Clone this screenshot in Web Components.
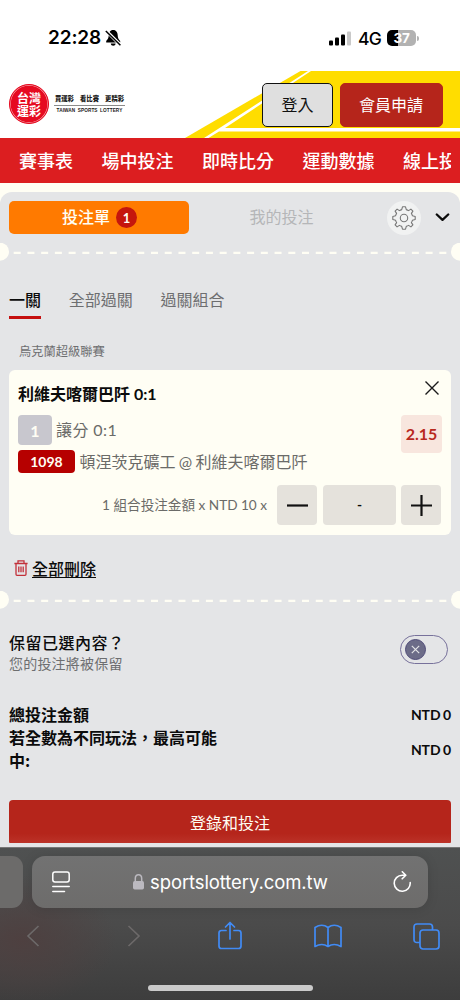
<!DOCTYPE html>
<html lang="zh-Hant">
<head>
<meta charset="utf-8">
<title>台灣運彩</title>
<style>
html,body{margin:0;padding:0}
body{width:460px;height:1000px;overflow:hidden;background:#fffef4;font-family:Lato,"Noto Sans CJK TC",sans-serif;color:#0b0b0b}
</style>
</head>
<body>
<phone-screen></phone-screen>
<script>
const define = (name, css, html) => customElements.define(name, class extends HTMLElement {
  constructor() {
    super();
    const root = this.attachShadow({ mode: 'open' });
    root.innerHTML = `<style>*{box-sizing:border-box}:host{display:block;box-sizing:border-box;white-space:nowrap}svg{display:block;flex:none}${css}</style>${html}`;
  }
});

define('status-bar', `
:host{height:71px;background:#fff;font-family:Inter,sans-serif;color:#000}
.row{display:flex;align-items:center;height:76px;padding:0 41px 0 48px}
.time{font-size:19px;font-weight:600;width:57px;line-height:24px;letter-spacing:-.15px}
.net{font-size:17.5px;font-weight:500;margin-left:10px;width:22px;letter-spacing:-.8px}
.gap{flex:1}
.bat{width:29px;height:16px;border-radius:5px;background:linear-gradient(90deg,#000 38%,#b2b2b2 38%);color:#fff;font-weight:700;font-size:13.5px;line-height:16px;text-align:center;margin-left:7px;letter-spacing:-.3px}
.tip{width:2px;height:5px;border-radius:0 2px 2px 0;background:#b2b2b2;margin-left:1px}
svg.sig{margin-right:-3px}
`, `<div class="row"><span class="time">22:28</span>
<svg width="17" height="18" viewBox="0 0 17 18"><path d="M8.2 1C5 1 3.8 3.6 3.7 6.3 3.6 10 2.2 10.8 1.2 12v1.500h14V12c-1-1.200-2.400-2-2.500-5.700C12.600 3.600 11.400 1 8.200 1zM5.800 14.600h4.800c0 3-4.800 3-4.800 0z"/><path d="M1 1.700 16 16.500" stroke="#fff" stroke-width="3.200"/><path d="M.8 2 15.400 16.300" stroke="#000" stroke-width="1.500"/></svg>
<span class="gap"></span>
<svg class="sig" width="22" height="15" viewBox="0 0 22 15"><rect y="9.500" width="4" height="5" rx="1"/><rect x="6" y="6.500" width="4" height="8" rx="1"/><rect x="12" y="3.500" width="4" height="11" rx="1"/><rect x="18" y=".5" width="4" height="14" rx="1" fill="#c9c9c9"/></svg>
<span class="net">4G</span><span class="bat">37</span><span class="tip"></span></div>`);

define('brand-logo', `
:host{display:flex;align-items:center;color:#1a1a1a;font-family:"Noto Sans CJK TC",sans-serif}
.seal{width:40px;height:40px;border-radius:50%;background:#e60a20;border:1px solid #e60a20;box-shadow:inset 0 0 0 .7px #f6a2a8;color:#fff;font-weight:700;font-size:12px;line-height:13px;text-align:center;padding-top:6px}
.words{margin-left:5px;width:71px}
.zh{display:flex;justify-content:space-between;font-size:6.3px;font-weight:900;line-height:9px;padding:0 1px 0 1px;height:10px}
.en{border-top:1px solid #8b8b8b;text-align:center;font:600 4.7px/6px "Liberation Sans",sans-serif;padding-top:2px;height:10px;margin-top:1px;letter-spacing:.1px;word-spacing:1px}
`, `<div class="seal">台灣<br>運彩</div><div class="words"><div class="zh"><span>買運彩</span><span>看比賽</span><span>更精彩</span></div><div class="en">TAIWAN SPORTS LOTTERY</div></div>`);

define('site-header', `
:host{height:67px;display:grid;background:#fff}
.art,.row{grid-area:1/1}
.row{display:flex;align-items:flex-start;padding:12px 17px 0 9px}
brand-logo{flex:1;padding-top:1px}
.btn{height:44px;border-radius:5px;font-size:16px;line-height:42px;text-align:center}
.login{width:71px;border:1px solid #111;background:#dfdfdf;color:#111}
.join{width:103px;margin-left:7px;background:#b5251b;color:#fff;border:1px solid #b5251b;padding-right:1px}
`, `<svg class="art" width="460" height="67" viewBox="0 0 460 67"><path d="M300.500 0H460V67H185z" fill="#ffdd00"/><path d="M308 0 204 67H208.500L219 60.500H460V57H225L311 0z" fill="#fff"/></svg>
<div class="row"><brand-logo></brand-logo><div class="btn login">登入</div><div class="btn join">會員申請</div></div>`);

define('site-nav', `
:host{display:flex;gap:28.300px;height:45px;background:#dc1e20;color:#fff;font:500 18px/44px "Noto Sans CJK TC",sans-serif;padding:0 9px 0 19px}
.clip{overflow:hidden;flex:1}
span{letter-spacing:.05px}
`, `<span>賽事表</span><span>場中投注</span><span>即時比分</span><span>運動數據</span><span class="clip">線上投注</span>`);

define('slip-tabs', `
:host{display:flex;align-items:center;height:51px;padding:0 10px 0 9px}
.on{display:flex;align-items:center;justify-content:center;gap:6px;width:180px;height:33px;border-radius:5px;background:#ff7a00;color:#fffef4;font:500 16px/31px "Noto Sans CJK TC",sans-serif;padding-left:1px}
.on span:first-child{height:33px}
.n{width:21px;height:21px;border-radius:50%;background:#c5160d;text-align:center;font:700 13px/22px Lato,sans-serif}
.off{width:198px;text-align:center;color:#b5b6b8;font:16px/31px "Noto Sans CJK TC",sans-serif;height:33px;padding-right:13px}
.gear{width:34px;height:34px;border-radius:50%;background:#f1f2f2;display:grid;place-items:center}
.chev{margin-left:14px}
`, `<div class="on"><span>投注單</span><span class="n">1</span></div><div class="off">我的投注</div>
<div class="gear"><svg width="24" height="24" viewBox="-12 -12 24 24" fill="none" stroke="#777" stroke-width="1.100" stroke-linejoin="round"><circle r="3.700"/><path d="M-1.500-11.200H1.500L2.300-8.400Q3.600-8 4.600-7.400L6.900-8.900 8.900-6.900 7.400-4.600Q8-3.600 8.400-2.300L11.200-1.500V1.500L8.400 2.300Q8 3.600 7.400 4.600L8.900 6.900 6.900 8.900 4.600 7.400Q3.600 8 2.300 8.400L1.500 11.200H-1.500L-2.300 8.400Q-3.600 8-4.600 7.400L-6.900 8.900-8.900 6.900-7.400 4.600Q-8 3.600-8.400 2.300L-11.200 1.500V-1.500L-8.400-2.300Q-8-3.600-7.400-4.600L-8.900-6.900-6.900-8.900-4.600-7.400Q-3.600-8-2.300-8.400z"/></svg></div>
<svg class="chev" width="15" height="9" viewBox="0 0 15 9" fill="none" stroke="#0b0b0b" stroke-width="2.300" stroke-linecap="round" stroke-linejoin="round"><path d="M1.800 1.500 7.500 6.800 13.200 1.500"/></svg>`);

define('ticket-divider', `:host{height:18px}`, `<svg width="460" height="18" viewBox="0 0 460 18" fill="#fffef4"><circle cy="8.700" r="9"/><circle cx="460" cy="8.700" r="9"/><path d="M13.700 9.800H449" stroke="#fffef4" stroke-width="2.300" stroke-dasharray="7 6.730"/></svg>`);

define('mode-tabs', `
:host{display:flex;gap:27.700px;padding:24px 9px 0;height:80px;font:16px/28px "Noto Sans CJK TC",sans-serif;color:#6d6e70}
.on{color:#0b0b0b;font-weight:500;height:34px;border-bottom:3px solid #c5100f}
`, `<span class="on">一關</span><span>全部過關</span><span>過關組合</span>`);

define('bet-card', `
:host{display:block;margin:0 9px;height:165px;border-radius:6px;background:#fffef4;padding:9px 9px 0;color:#6b6b68;font-size:16px}
.r{display:flex;align-items:flex-start}
.title{height:36px;justify-content:space-between;color:#0b0b0b;font-weight:700;line-height:30px}
.title svg{margin:2px 3px 0 0}
.mid{height:70px;justify-content:space-between}
.line{display:flex;align-items:center}
.line span:last-child{padding-bottom:2px}
.line .tag{flex:none}
.tag{border-radius:4px;color:#fffef4;font-weight:700;text-align:center}
.one{width:34px;height:30px;background:#c8c7ce;line-height:31px;margin-right:4px}
.code{width:57px;height:23px;background:#b60000;font-size:14px;line-height:23px;margin-right:4.500px}
.odds{width:41px;height:38px;border-radius:4px;background:#f8e6de;color:#b8291e;font-weight:700;font-size:16px;line-height:38px;text-align:center}
.stake{justify-content:flex-end;align-items:center;font-size:13.600px;gap:5px;padding-right:1px}
.stake span{margin-right:5px;padding-bottom:2px}
.b{height:40px;border-radius:4px;background:#e5e2dc;display:grid;place-items:center;color:#0b0b0b}
`, `<div class="r title"><span>利維夫喀爾巴阡 0:1</span><svg width="14" height="14" viewBox="0 0 14 14" stroke="#1a1a1a" stroke-width="1.400"><path d="M.5.500 13.500 13.500M13.500.500.500 13.500"/></svg></div>
<div class="r mid"><div><div class="line" style="height:30px"><span class="tag one">1</span><span style="letter-spacing:.4px">讓分 0:1</span></div><div class="line" style="margin-top:5px;height:23px"><span class="tag code">1098</span><span style="word-spacing:-.8px">頓涅茨克礦工 @ 利維夫喀爾巴阡</span></div></div><div class="odds">2.15</div></div>
<div class="r stake"><span>1 組合投注金額 x NTD 10 x</span><div class="b" style="width:40px"><svg width="21" height="3"><path d="M0 1.500H21" stroke="#111" stroke-width="2.200"/></svg></div><div class="b" style="width:73px;margin-left:1px;font-weight:700">-</div><div class="b" style="width:40px"><svg width="21" height="21"><path d="M0 10.500H21M10.500 0V21" stroke="#111" stroke-width="2.200"/></svg></div></div>`);

define('clear-all', `
:host{display:flex;align-items:center;gap:4px;height:56px;padding:10px 14px 0;font:500 16px/24px "Noto Sans CJK TC",sans-serif}
span{text-decoration:underline;text-decoration-thickness:1px;text-underline-offset:2px}
`, `<svg width="14" height="16" viewBox="0 0 14 16" fill="none" stroke="#c2303a" stroke-width="1.300"><path d="M.4 3.500H13.600M4 3.200V.8H10V3.200M2 3.500V14.200Q2 15.300 3 15.300H11Q12 15.300 12 14.200V3.500M4.800 6.500V12.300M7 6.500V12.300M9.200 6.500V12.300"/></svg><span>全部刪除</span>`);

define('keep-switch', `
:host{display:flex;justify-content:space-between;padding:22px 12px 0 9px;height:94px}
.a{font:500 16px/22px "Noto Sans CJK TC",sans-serif;letter-spacing:.5px}
.b{font:14px/20px "Noto Sans CJK TC",sans-serif;color:#6d6e70;letter-spacing:.2px}
.sw{width:48px;height:29px;border:1px solid #77719b;border-radius:15px;margin-top:4px;padding:3px 4px}
.k{width:21px;height:21px;border-radius:50%;background:#6c6c88;border:1px solid #4f4b78;display:grid;place-items:center}
`, `<div><div class="a">保留已選內容？</div><div class="b">您的投注將被保留</div></div><div class="sw"><div class="k"><svg width="9" height="9" stroke="#e4e5e7" stroke-width="1.200"><path d="M.8.800 8.200 8.200M8.200.800.800 8.200"/></svg></div></div>`);

define('slip-totals', `
:host{padding:0 9px;height:97px;font:700 16px/23px "Noto Sans CJK TC",sans-serif}
.r{display:flex;justify-content:space-between;align-items:center}
.l{width:212px;white-space:normal}
.v{font:700 14px/23px Lato,sans-serif;letter-spacing:-.1px;word-spacing:-.8px}
`, `<div class="r"><span class="l">總投注金額</span><span class="v">NTD 0</span></div><div class="r"><span class="l">若全數為不同玩法，最高可能中:</span><span class="v">NTD 0</span></div>`);

define('bet-slip', `
:host{height:655px;background:#e4e5e7;border-radius:12px 12px 0 0;margin-top:9px}
.league{height:29px;padding-left:19px;font:12.250px/20px "Noto Sans CJK TC",sans-serif;color:#6d6e70}
.submit{margin:0 9px;height:43px;border-radius:4px 4px 1px 1px;background:linear-gradient(#b5251b 78%,#bb3228);color:#fffef4;font:16px/45px "Noto Sans CJK TC",sans-serif;text-align:center}
`, `<slip-tabs></slip-tabs><ticket-divider></ticket-divider><mode-tabs></mode-tabs><div class="league">烏克蘭超級聯賽</div><bet-card></bet-card><clear-all></clear-all><ticket-divider></ticket-divider><keep-switch></keep-switch><slip-totals></slip-totals><div class="submit">登錄和投注</div>`);

define('browser-bar', `
:host{height:153px;background:radial-gradient(ellipse 95px 65px at 22px 92px,#4e4040 0,rgba(78,64,64,0) 100%),linear-gradient(#4f5151,#4b4b4b 50%,#3d3d3d);border-top:1px solid #777;color:#fff;font:18.500px/50px Inter,sans-serif}
.tabs{display:flex;padding-top:8px;gap:9px}
.prev{width:23px;height:52px;background:#6c6b6a;border-radius:0 11px 11px 0}
.addr{width:396px;height:52px;border-radius:13px;background:linear-gradient(#727272,#6d6c6b);box-shadow:0 1px 12px rgba(0,0,0,.12);display:flex;align-items:center;padding:0 16px 0 20px}
.url{margin-left:6px;width:179px;letter-spacing:-.1px}
.tools{display:grid;grid-template-columns:repeat(5,98px);justify-content:center;justify-items:center;align-items:center;height:56px}
.tools svg:nth-child(1){margin-right:2px}
.tools svg:nth-child(2){margin-left:3px}
.home{width:165px;height:6px;border-radius:3px;background:#cacaca;margin:21px auto 0}
`, `<div class="tabs"><div class="prev"></div><div class="addr">
<svg width="18" height="22" viewBox="0 0 18 22" fill="none" stroke="#fff" stroke-width="1.500" stroke-linecap="round"><rect x=".8" y="1" width="16.400" height="10" rx="2.200"/><path d="M.8 15.500H17.200M.8 20.500H12.500"/></svg>
<svg style="margin-left:63px" width="11" height="16" viewBox="0 0 11 16"><path d="M2.300 8V4.500C2.300-.5 8.700-.5 8.700 4.500V8" fill="none" stroke="#bbb9bf" stroke-width="1.500"/><rect y="7" width="11" height="8.500" rx="1.700" fill="#bbb9bf"/></svg>
<span class="url">sportslottery.com.tw</span><span style="flex:1"></span>
<svg width="20" height="22" viewBox="0 0 20 22" fill="none" stroke="#fff" stroke-width="1.600" stroke-linecap="round" stroke-linejoin="round"><path d="M18.200 11.500A8 8 0 1 1 10.200 4.200H13.500M10.300.8 13.800 4.300 10.200 7.800"/></svg></div></div>
<div class="tools">
<svg width="14" height="22" viewBox="0 0 14 22" fill="none" stroke="#6d6a6a" stroke-width="1.600"><path d="M12.500 1 2 11 12.500 21"/></svg>
<svg width="14" height="22" viewBox="0 0 14 22" fill="none" stroke="#6d6a6a" stroke-width="1.600"><path d="M1.500 1 12 11 1.500 21"/></svg>
<svg width="24" height="30" viewBox="0 0 24 30" fill="none" stroke="#418bf5" stroke-width="1.700" stroke-linecap="round" stroke-linejoin="round"><path d="M8 9.500H3.500Q1 9.500 1 12V25Q1 27.500 3.500 27.500H20.500Q23 27.500 23 25V12Q23 9.500 20.500 9.500H16M12 18V1.500M7.500 6 12 1.500 16.500 6"/></svg>
<svg width="28" height="24" viewBox="0 0 28 24" fill="none" stroke="#418bf5" stroke-width="1.700" stroke-linejoin="round"><path d="M14 3.500Q8-1 1 3.500V22.500Q8 18.500 14 22.500 20 18.500 27 22.500V3.500Q20-1 14 3.500V22.500"/></svg>
<svg width="27" height="27" viewBox="0 0 27 27" fill="none" stroke="#418bf5" stroke-width="1.700"><path d="M7 19.500H4Q1 19.500 1 16.500V4Q1 1 4 1H16.500Q19.500 1 19.500 4V7"/><rect x="7" y="7" width="19" height="19" rx="3"/></svg>
</div><div class="home"></div>`);

define('phone-screen', `:host{width:460px;height:1000px;overflow:hidden}`, `<status-bar></status-bar><site-header></site-header><site-nav></site-nav><bet-slip></bet-slip><browser-bar></browser-bar>`);
</script>
</body>
</html>
